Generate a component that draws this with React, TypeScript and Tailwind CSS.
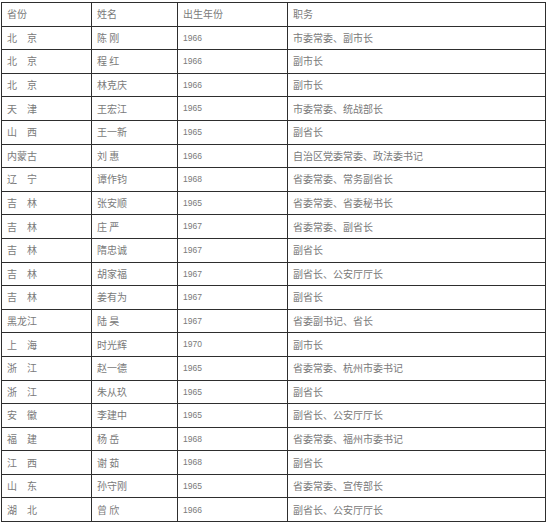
const rows: [string, string, string, string][] = [
  ["北　京", "陈 刚", "1966", "市委常委、副市长"],
  ["北　京", "程 红", "1966", "副市长"],
  ["北　京", "林克庆", "1966", "副市长"],
  ["天　津", "王宏江", "1965", "市委常委、统战部长"],
  ["山　西", "王一新", "1965", "副省长"],
  ["内蒙古", "刘 惠", "1966", "自治区党委常委、政法委书记"],
  ["辽　宁", "谭作钧", "1968", "省委常委、常务副省长"],
  ["吉　林", "张安顺", "1965", "省委常委、省委秘书长"],
  ["吉　林", "庄 严", "1967", "省委常委、副省长"],
  ["吉　林", "隋忠诚", "1967", "副省长"],
  ["吉　林", "胡家福", "1967", "副省长、公安厅厅长"],
  ["吉　林", "姜有为", "1967", "副省长"],
  ["黑龙江", "陆 昊", "1967", "省委副书记、省长"],
  ["上　海", "时光辉", "1970", "副市长"],
  ["浙　江", "赵一德", "1965", "省委常委、杭州市委书记"],
  ["浙　江", "朱从玖", "1965", "副省长"],
  ["安　徽", "李建中", "1965", "副省长、公安厅厅长"],
  ["福　建", "杨 岳", "1968", "省委常委、福州市委书记"],
  ["江　西", "谢 茹", "1968", "副省长"],
  ["山　东", "孙守刚", "1965", "省委常委、宣传部长"],
  ["湖　北", "曾 欣", "1966", "副省长、公安厅厅长"],
];

const cell = "border border-[#2e2e2e] px-[5px] h-[23.6px] p-0 align-middle";

export default function App() {
  return (
    <div className="w-[550px] h-[522px] bg-white pt-[2px] pl-[1px] font-['Noto_Sans_CJK_SC',sans-serif] text-[#7a7a7a]">
      <table className="border-collapse table-fixed w-[544px] text-[10px] leading-none">
        <colgroup>
          <col className="w-[90px]" />
          <col className="w-[86px]" />
          <col className="w-[110px]" />
          <col className="w-[258px]" />
        </colgroup>
        <thead>
          <tr>
            <td className={cell}>省份</td>
            <td className={cell}>姓名</td>
            <td className={cell}>出生年份</td>
            <td className={cell}>职务</td>
          </tr>
        </thead>
        <tbody>
          {rows.map((r, i) => (
            <tr key={i}>
              <td className={cell}>{r[0]}</td>
              <td className={cell}>{r[1]}</td>
              <td className={cell + " text-[8.5px] font-['Liberation_Sans',sans-serif]"}>{r[2]}</td>
              <td className={cell}>{r[3]}</td>
            </tr>
          ))}
        </tbody>
      </table>
    </div>
  );
}
